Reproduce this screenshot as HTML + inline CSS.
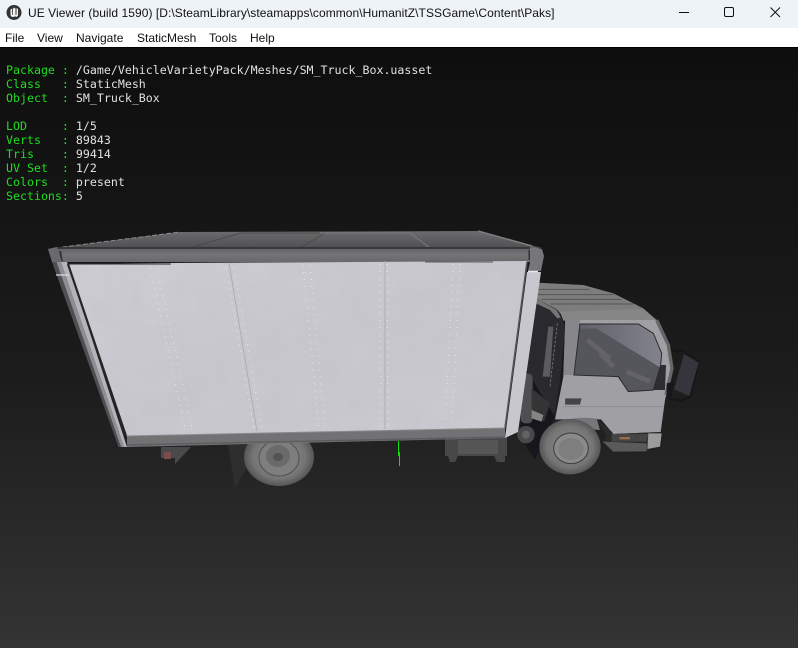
<!DOCTYPE html>
<html><head><meta charset="utf-8"><style>
html,body{margin:0;padding:0;width:798px;height:648px;overflow:hidden;background:#111}
#tb{position:absolute;left:0;top:0;width:798px;height:28px;background:#eef3f8}
#tt{position:absolute;left:28px;top:5px;font:12px/17px "Liberation Sans",sans-serif;color:#111;white-space:nowrap;letter-spacing:.06px}
#mn{position:absolute;left:0;top:28px;width:798px;height:19px;background:#fff}
#mn span{position:absolute;top:2px;font:12px/16px "Liberation Sans",sans-serif;color:#111;white-space:nowrap}
#vp{position:absolute;left:0;top:47px;width:798px;height:601px;background:linear-gradient(#0e0e0e 0,#1c1c1c 55%,#343434 100%);border-top:1px solid #000;box-sizing:border-box}
#g{position:absolute;left:0;top:0}
.t{position:absolute;left:6px;font:11.62px/14px "DejaVu Sans Mono",monospace;color:#e0e0e0;white-space:pre}
.t b{font-weight:normal;color:#1fdc1f}
</style></head><body>
<div id="vp"></div>
<svg id="g" width="798" height="648" viewBox="0 0 798 648">
<defs>
<linearGradient id="pn" x1="0" y1="0" x2="1" y2="1"><stop offset="0" stop-color="#cdcdd3"/><stop offset=".5" stop-color="#c8c7ce"/><stop offset="1" stop-color="#cbcad1"/></linearGradient>
<linearGradient id="rf" x1="0" y1="0" x2="0" y2="1"><stop offset="0" stop-color="#6c6c6e"/><stop offset="1" stop-color="#505052"/></linearGradient>
<linearGradient id="rl" x1="0" y1="0" x2="0" y2="1"><stop offset="0" stop-color="#5e5e60"/><stop offset=".5" stop-color="#747476"/><stop offset="1" stop-color="#69696b"/></linearGradient>
<linearGradient id="gl" x1="0" y1="0" x2="1" y2="0"><stop offset="0" stop-color="#5f5f68"/><stop offset="1" stop-color="#83838d"/></linearGradient>
<radialGradient id="ty"><stop offset="0" stop-color="#8a8a8a"/><stop offset=".75" stop-color="#757575"/><stop offset="1" stop-color="#565656"/></radialGradient>
<filter id="n" x="0" y="0" width="100%" height="100%"><feTurbulence type="fractalNoise" baseFrequency=".035" numOctaves="3" seed="4"/><feColorMatrix values="0 0 0 0 .45  0 0 0 0 .45  0 0 0 0 .47  .28 0 0 0 -.09"/><feComposite in2="SourceAlpha" operator="in" result="c"/><feMerge><feMergeNode in="SourceGraphic"/><feMergeNode in="c"/></feMerge></filter>
<filter id="s" x="-5%" y="-5%" width="110%" height="110%"><feGaussianBlur stdDeviation="1.1"/></filter>
</defs>

<!-- axis -->
<path d="M398.5 441V456M399.5 452V466" stroke="#0be00b" fill="none"/>

<!-- rear parts below box -->
<path d="M161 447H191L176 463L175 465V458H161Z" fill="#4a4a4c"/>
<rect x="164" y="452" width="7" height="7" fill="#7d4a4e"/>
<path d="M228 445H250V462L235 488Z" fill="#2e2e30"/>
<ellipse cx="279" cy="457" rx="35" ry="29" fill="url(#ty)"/>
<ellipse cx="279" cy="458" rx="20" ry="18" fill="#7e7e7e" stroke="#505050"/>
<ellipse cx="278" cy="456" rx="12" ry="11" fill="#6a6a6a"/>
<ellipse cx="278" cy="457" rx="5" ry="4" fill="#535353"/>
<path d="M445 437H507V456H505V462H497L494 456H458L455 462H450L448 456H445Z" fill="#48484a"/>
<path d="M458 440H498V454H458Z" fill="#565657"/>

<!-- cab (zoom coordinates) -->
<g transform="translate(500 230) scale(.33333)" filter="url(#s)">
<!-- roof -->
<path d="M108 158L250 165L340 190L430 235L470 270L450 272L200 272L170 238L108 205Z" fill="#7d7d7e"/>
<path d="M112 178H270M112 194H340M125 208H365M150 222H400" stroke="#565657" stroke-width="3" fill="none"/>
<path d="M180 245L430 237L470 272L190 272Z" fill="#868687"/>
<!-- dark back panel -->
<path d="M108 205L180 250L195 290L180 450L160 570L80 420Z" fill="#2a2a2f"/>
<path d="M108 205L170 240L182 262L172 265L150 240L108 220Z" fill="#747474"/>
<path d="M145 290H160L150 440H128Z" fill="#5c5c60"/>
<path d="M172 280L150 470" stroke="#8a8a8a" stroke-width="2" stroke-dasharray="8 5" fill="none"/>
<!-- door body -->
<path d="M196 270H470L505 350L516 420L495 510L482 606L340 612L303 568H165L190 440Z" fill="#a0a0a4"/>
<path d="M196 270H240L222 435H190Z" fill="#87878a"/>
<path d="M470 270L505 345L516 415L498 495" stroke="#666668" stroke-width="10" fill="none"/>
<!-- glass -->
<path d="M222 435L240 282H415L460 310L485 370L482 405L460 480L385 485L355 440Z" fill="url(#gl)"/>
<path d="M240 296L290 296L480 412L460 480L385 485L355 440L224 433Z" fill="#55555c"/>
<path d="M262 330L330 385M300 370L340 410M380 425L450 455" stroke="#636369" stroke-width="14" fill="none"/>
<path d="M222 435L240 282H415L460 310L485 370L482 405L460 480L385 485L355 440Z" fill="none" stroke="#2a2a2c" stroke-width="3"/>
<path d="M482 405L460 480H495L498 405Z" fill="#2e2e30"/>
<path d="M196 505H245L240 524H195Z" fill="#454547"/>
<path d="M190 530H490" stroke="#8e8e92" stroke-width="3"/>
<!-- mirror -->
<path d="M520 362L548 362L596 395L572 498L545 512L505 505" fill="none" stroke="#151517" stroke-width="6"/>
<path d="M552 372L596 398L568 498L522 478Z" fill="#36363c"/>
<path d="M500 460L522 455L515 500L500 498Z" fill="#18181a"/>
<!-- engine -->
<path d="M80 420L165 560L150 590L105 690L60 620L70 500Z" fill="#19191c"/>
<rect x="62" y="430" width="36" height="150" rx="14" fill="#505052"/>
<circle cx="78" cy="614" r="26" fill="#4a4a4c"/>
<circle cx="78" cy="614" r="12" fill="#626262"/>
<path d="M95 475L150 520L132 575L95 545Z" fill="#343436"/>
<path d="M95 540L130 555L125 575L95 565Z" fill="#858585"/>
<!-- step/bumper -->
<path d="M290 566L335 605L340 612L480 606L485 615L440 655L340 665L308 635L320 620Z" fill="#2a2a2b"/>
<path d="M308 635L440 640V664L340 665Z" fill="#5a5a5b"/>
<path d="M335 612H445L440 635H335Z" fill="#444"/>
<rect x="358" y="621" width="32" height="7" fill="#9a6c4a"/>
<path d="M445 610H485L480 650L442 657Z" fill="#9c9c9c"/>
<!-- wheel -->
<path d="M145 590Q210 555 290 566L300 600Z" fill="#77777a"/>
<ellipse cx="210" cy="650" rx="92" ry="83" fill="url(#ty)"/>
<ellipse cx="213" cy="655" rx="52" ry="46" fill="#8a8a8a" stroke="#3c3c3c" stroke-width="3"/>
<ellipse cx="213" cy="657" rx="38" ry="33" fill="#7e7e7e"/>
</g>

<!-- roof -->
<path d="M55 248L180 232L478 231L542 248Z" fill="url(#rf)"/>
<path d="M190 248L240 233H325L300 248" stroke="#444" fill="none" stroke-width=".7"/>
<path d="M320 233H410L430 248" stroke="#7a7a7c" fill="none"/>
<path d="M55 248L180 232" stroke="#8a8a8c" stroke-width="1" stroke-dasharray="5 2" fill="none"/>
<path d="M478 231L532 246" stroke="#7e7e80" stroke-width="1.5" fill="none"/>
<!-- top rail -->
<rect x="56" y="247" width="476" height="15" fill="url(#rl)"/>
<path d="M57 248H530" stroke="#2a2a2c" stroke-width="1.5"/>
<path d="M60 251L62 262" stroke="#333" stroke-width="2"/>
<path d="M530 250V260" stroke="#333" stroke-width="3"/>
<!-- left post -->
<path d="M48 249L57 247L62 262L66 264L52 262Z" fill="#6a6a6c"/>
<path d="M52 262L56.5 262L121 447H118.5Z" fill="#4f4f53"/>
<path d="M56.5 262L61 262L124 447H121Z" fill="#8e8e92"/>
<path d="M61 262L67 262L127 447H124Z" fill="#b4b4b9"/>
<path d="M56 275H69" stroke="#dcdce0" stroke-width="1.3"/>
<!-- panel -->
<path d="M68 264L171 263L527 261L505 428L126 436Z" fill="url(#pn)" filter="url(#n)"/>
<path d="M68 264H171" stroke="#2a2a2c" stroke-width="1"/>
<path d="M425 262H493" stroke="#3a3a3c" stroke-width=".8"/>
<path d="M68 264L126 436" stroke="#262628" stroke-width="2.2"/>
<!-- seams and rivets -->
<path d="M229 263L257 431M385 261L385 429" stroke="#a8a8af" stroke-width=".8" fill="none"/>
<path d="M150 268L185 428M157 268L192 428M226 268L254 428M234 268L262 428M303 265L319 428M310 265L325 428M380 264L381 428M387 264L388 428M453 264L445 425M460 264L452 425" stroke="#ecECF2" stroke-width="1.1" stroke-dasharray="1 6" fill="none" opacity=".85"/>
<path d="M74 268L126 430" stroke="#e0e0e6" stroke-width="1" stroke-dasharray="1 8" fill="none" opacity=".7"/>
<!-- right post -->
<path d="M527 272H541L518 432L505 438Z" fill="#c8c7ce"/>
<path d="M530 248L534 247L542 249L544 256L541 271H528L530 262Z" fill="#767679"/>
<path d="M528 271.5H538" stroke="#e8e8ec" stroke-width="1.5"/>
<path d="M527 262L505 428" stroke="#55555a" stroke-width="1.6"/>
<!-- bottom rail -->
<path d="M127 436L505 428V438L127 447Z" fill="#727274"/>
<path d="M127 436L505 428" stroke="#8a8a8c" stroke-width="1" fill="none"/>
<path d="M127 445L505 437" stroke="#5e5e60" stroke-width="1.5" fill="none"/>
</svg>

<div id="tb"></div>
<svg style="position:absolute;left:6px;top:4px" width="18" height="18" viewBox="0 0 18 18">
<circle cx="8" cy="8.5" r="7.5" fill="#333"/>
<path d="M4.5 5.5V10.5Q4.5 12.8 7 13Q8 13 9 12.2L10.5 13L12 11.5V5L10.5 4V10.5L9.5 11V4.5L8 3.5L7 5V11L6.2 10.5V4.5Z" fill="#f2f2f2"/>
</svg>
<div id="tt">UE Viewer (build 1590) [D:\SteamLibrary\steamapps\common\HumanitZ\TSSGame\Content\Paks]</div>
<svg style="position:absolute;left:660px;top:0" width="138" height="28" viewBox="0 0 138 28">
<path d="M19 12.5H29" stroke="#111" fill="none"/>
<rect x="64.5" y="7.5" width="9" height="9" rx="1.5" stroke="#111" fill="none"/>
<path d="M110.5 7.5L120 17M120 7.5L110.5 17" stroke="#111" fill="none"/>
</svg>
<div id="mn"><span style="left:5px">File</span><span style="left:37px">View</span><span style="left:76px">Navigate</span><span style="left:137px">StaticMesh</span><span style="left:209px">Tools</span><span style="left:250px">Help</span></div>

<div class="t" style="top:63px"><b>Package : </b>/Game/VehicleVarietyPack/Meshes/SM_Truck_Box.uasset</div>
<div class="t" style="top:77px"><b>Class   : </b>StaticMesh</div>
<div class="t" style="top:91px"><b>Object  : </b>SM_Truck_Box</div>
<div class="t" style="top:119px"><b>LOD     : </b>1/5</div>
<div class="t" style="top:133px"><b>Verts   : </b>89843</div>
<div class="t" style="top:147px"><b>Tris    : </b>99414</div>
<div class="t" style="top:161px"><b>UV Set  : </b>1/2</div>
<div class="t" style="top:175px"><b>Colors  : </b>present</div>
<div class="t" style="top:189px"><b>Sections: </b>5</div>
</body></html>
